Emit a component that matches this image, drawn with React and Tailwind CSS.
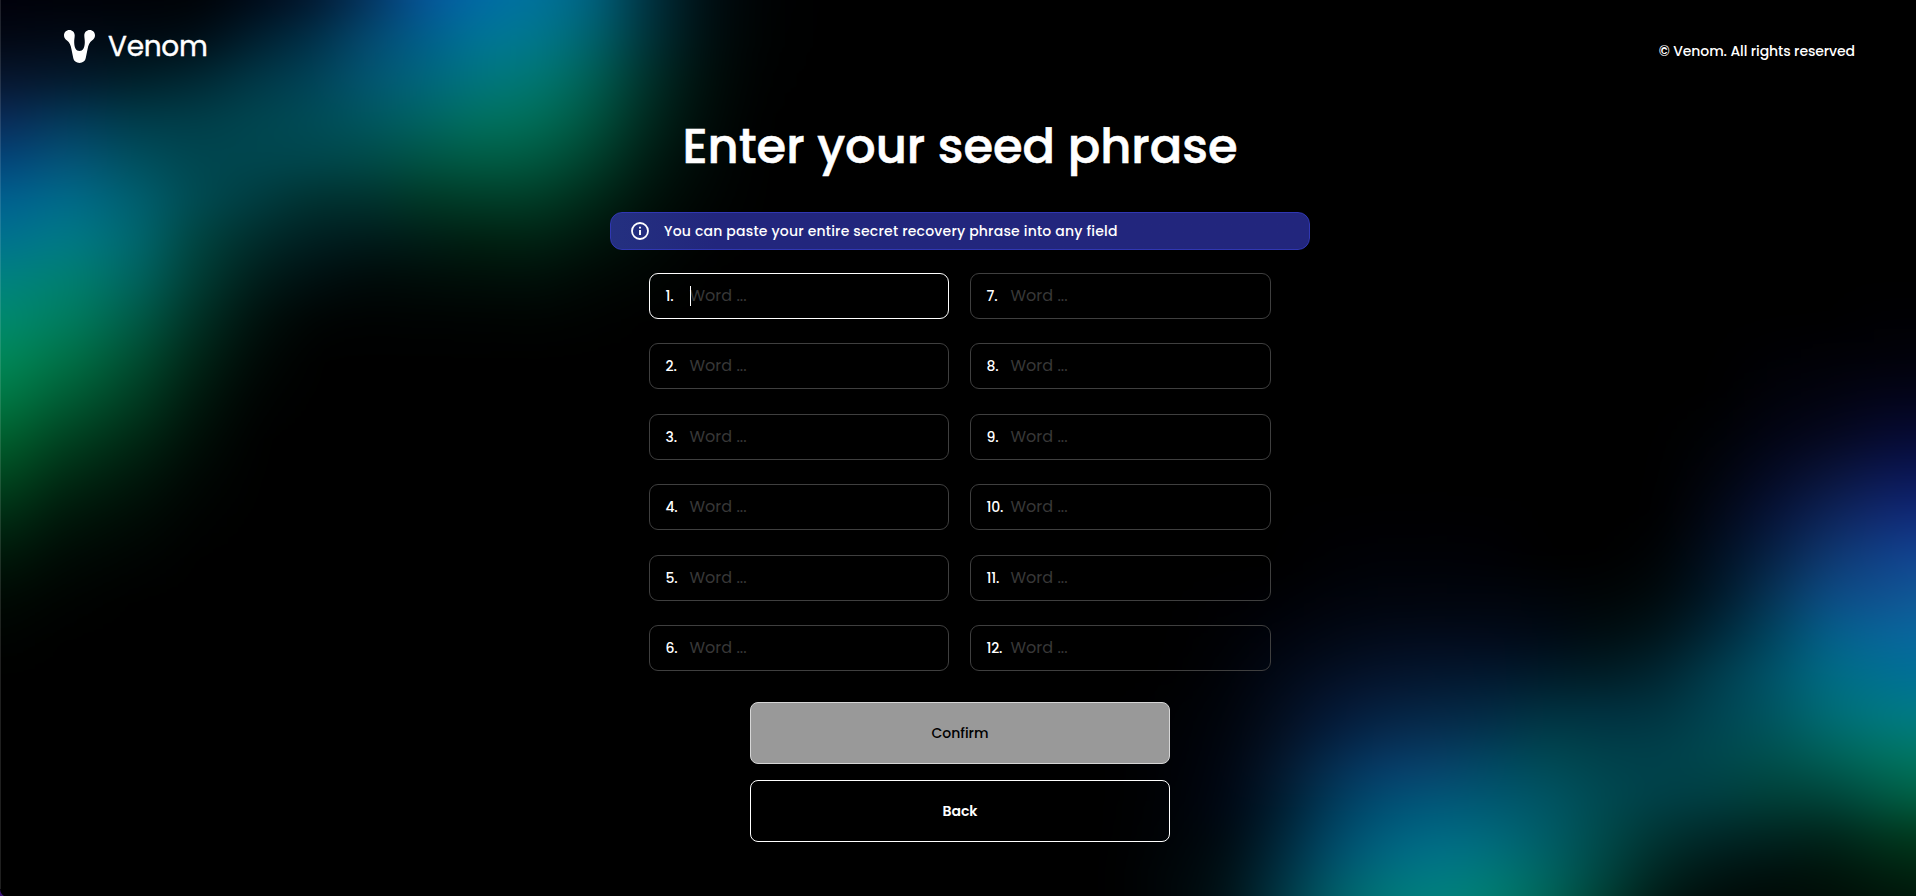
const STEP = 40;

// Vertical colour ramps of the glow; every ramp starts at y0 and takes a stop each STEP pixels.
const RAMPS = [
  { x: 0, y0: 0, c: ['#00000a', '#020814', '#07162f', '#0a2a58', '#03447a', '#006090', '#00728f', '#008280', '#008a6e', '#008858', '#007844', '#00602e', '#00461f', '#002c13', '#001709', '#000903', '#000301', '#000'] },
  { x: 70, y0: 0, c: ['#000208', '#020a16', '#041a2e', '#033a5a', '#045478', '#006b8a', '#007a86', '#008070', '#007c5e', '#007046', '#005a33', '#004020', '#002812', '#001509', '#000904', '#000301', '#000'] },
  { x: 135, y0: 0, c: ['#000207', '#000a12', '#00202a', '#003c4a', '#00505f', '#006070', '#006870', '#006560', '#005c48', '#004e32', '#003c22', '#002814', '#00170b', '#000b05', '#000402', '#000'] },
  { x: 197, y0: 0, c: ['#000306', '#000d16', '#002833', '#003d48', '#00464f', '#004a50', '#00443f', '#003c33', '#003024', '#002416', '#00180d', '#000e07', '#000603', '#000201', '#000'] },
  { x: 255, y0: 0, c: ['#000a18', '#002030', '#003746', '#00454f', '#00464e', '#003c40', '#002c2b', '#001d1a', '#00110d', '#000906', '#000302', '#000'] },
  { x: 312, y0: 0, c: ['#02182f', '#003048', '#004256', '#004b56', '#00464c', '#003130', '#001e20', '#000f10', '#000403', '#000'] },
  { x: 369, y0: 0, c: ['#043560', '#044a70', '#035570', '#00565f', '#004a48', '#00312e', '#001a1a', '#000a09', '#000202', '#000'] },
  { x: 427, y0: 0, c: ['#06559a', '#005f8c', '#00667c', '#006462', '#005444', '#003825', '#001d16', '#000c08', '#000302', '#000'] },
  { x: 482, y0: 0, c: ['#006ca6', '#007696', '#00767e', '#007260', '#005c44', '#003c28', '#002010', '#000e08', '#000302', '#000'] },
  { x: 537, y0: 0, c: ['#00749c', '#00788c', '#007872', '#006e58', '#005840', '#003c26', '#002213', '#000f09', '#000402', '#000'] },
  { x: 592, y0: 0, c: ['#006480', '#00646c', '#006054', '#005440', '#00402c', '#002818', '#00150c', '#000804', '#000201', '#000'] },
  { x: 648, y0: 0, c: ['#003240', '#003238', '#00302a', '#00281e', '#001c13', '#00110a', '#000905', '#000402', '#000'] },
  { x: 702, y0: 0, c: ['#001014', '#001011', '#000f0c', '#000c09', '#000806', '#000503', '#000201', '#000'] },
  { x: 760, y0: 0, c: ['#000203', '#000202', '#000101', '#000'] },
  { x: 830, y0: 0, c: ['#000', '#000'] },
  { x: 1110, y0: 540, c: ['#000', '#000'] },
  { x: 1166, y0: 553, c: ['#000', '#000', '#000', '#000', '#000103', '#000105', '#000205', '#000306', '#000508'] },
  { x: 1223, y0: 565, c: ['#000', '#000002', '#000104', '#000208', '#00040b', '#00050f', '#000612', '#000a10', '#001014'] },
  { x: 1278, y0: 530, c: ['#000', '#000', '#000107', '#010510', '#020a18', '#040f20', '#04162b', '#001c2e', '#002638', '#003040', '#003a40'] },
  { x: 1330, y0: 490, c: ['#000', '#000002', '#000105', '#01040d', '#020a18', '#04122a', '#041c3c', '#042e50', '#003c5c', '#004a68', '#005a68', '#006060'] },
  { x: 1383, y0: 490, c: ['#000', '#000003', '#000208', '#010610', '#030d20', '#051834', '#06294c', '#063d6a', '#005276', '#006480', '#00757a', '#007a70'] },
  { x: 1438, y0: 490, c: ['#000', '#000003', '#000208', '#010610', '#030e22', '#041c36', '#062e50', '#08446c', '#005c7c', '#007088', '#008082', '#008472'] },
  { x: 1492, y0: 485, c: ['#000', '#000002', '#000106', '#01060f', '#020c1e', '#021c34', '#03304a', '#004862', '#005a72', '#006c7c', '#007c74', '#007f6a'] },
  { x: 1549, y0: 557, c: ['#000', '#00040a', '#000a16', '#001c2a', '#003442', '#004852', '#005462', '#005c66', '#006460', '#006450'] },
  { x: 1604, y0: 553, c: ['#000', '#000405', '#000d10', '#001c24', '#003040', '#00404a', '#004850', '#00494a', '#004440', '#003c2c'] },
  { x: 1660, y0: 513, c: ['#000', '#000305', '#00090c', '#00141a', '#002430', '#003440', '#003f4a', '#004048', '#003434', '#002420', '#00140f'] },
  { x: 1717, y0: 395, c: ['#000', '#000205', '#01040c', '#020816', '#010f20', '#001828', '#00283a', '#003c4c', '#004452', '#00484e', '#003f42', '#002828', '#001412', '#000805'] },
  { x: 1773, y0: 316, c: ['#000', '#000004', '#01020a', '#020414', '#040a24', '#061338', '#062246', '#063456', '#004560', '#005268', '#005560', '#00504e', '#004038', '#002420', '#000f0c', '#000805'] },
  { x: 1829, y0: 316, c: ['#000', '#010106', '#02030f', '#05081e', '#0a143a', '#0d2458', '#0f3870', '#0c4c84', '#04608a', '#006c84', '#006c74', '#006058', '#00443a', '#00241a', '#00120a', '#000c06'] },
  { x: 1882, y0: 276, c: ['#000', '#000003', '#010108', '#030418', '#060a2e', '#0b1850', '#112a70', '#104086', '#10508f', '#086498', '#007090', '#007880', '#007060', '#005644', '#003420', '#001c0e', '#001008'] },
  { x: 1925, y0: 276, c: ['#000', '#000003', '#01010a', '#03041a', '#060a36', '#0a1658', '#102a7c', '#124494', '#105a98', '#0868a0', '#007098', '#007c84', '#007864', '#006444', '#003c1c', '#00240f', '#001408'] },
];

function Glow() {
  return (
    <svg className="pointer-events-none absolute inset-0" width="1916" height="896" viewBox="0 0 1916 896" aria-hidden="true">
      <defs>
        <filter id="soft" filterUnits="userSpaceOnUse" x="-120" y="-120" width="2160" height="1140" colorInterpolationFilters="sRGB">
          <feGaussianBlur stdDeviation="27 12" />
        </filter>
        {RAMPS.map((r) => (
          <linearGradient key={r.x} id={`ramp${r.x}`} gradientUnits="userSpaceOnUse" x1="0" x2="0" y1={r.y0} y2={r.y0 + STEP * (r.c.length - 1)}>
            {r.c.map((color, i) => (
              <stop key={i} offset={i / (r.c.length - 1)} stopColor={color} />
            ))}
          </linearGradient>
        ))}
      </defs>
      <g filter="url(#soft)">
        <rect x="-120" y="-120" width="2160" height="1140" fill="#000" />
        {RAMPS.map((r, i) => {
          const left = i === 0 ? -120 : (RAMPS[i - 1].x + r.x) / 2;
          const right = i === RAMPS.length - 1 ? 2040 : (r.x + RAMPS[i + 1].x) / 2;
          return <rect key={r.x} x={left} y="-120" width={right - left + 0.5} height="1140" fill={`url(#ramp${r.x})`} />;
        })}
      </g>
      <rect width="1" height="889" fill="#fff" opacity=".12" />
      <path d="M0 889c.4 3.600 1.600 5.600 4 7H0Z" fill="#3b1578" />
    </svg>
  );
}

function Logo() {
  return (
    <div className="flex items-center gap-[13px]">
      <svg width="31" height="33" viewBox="0 0 31 33" fill="#fff" aria-hidden="true">
        <path d="M5.300 0C8.400 0 10.700 2.300 10.700 5.300c0 2.600-.6 4.300-.5 7.300.1 5 1.900 8.500 5.300 8.500s5.200-3.500 5.300-8.500c.1-3-.5-4.700-.5-7.300C20.300 2.300 22.600 0 25.700 0 28.700 0 31 2.400 31 5.300c0 2.400-1.200 4-3 5.300-2.500 1.900-3.700 4.500-4.400 8.400l-1.900 9.300c-.5 2.700-2.900 4.700-6.200 4.700s-5.700-2-6.200-4.700L7.400 19C6.700 15.100 5.500 12.500 3 10.600 1.200 9.300 0 7.700 0 5.300 0 2.400 2.300 0 5.300 0Z" />
      </svg>
      <span className="mt-[2px] text-[28px] leading-8 tracking-[-0.3px] [-webkit-text-stroke:0.4px_#fff]">Venom</span>
    </div>
  );
}

function WordField({ n, active }) {
  return (
    <label className={`flex h-[46px] items-center rounded-[9px] border pl-[15.500px] ${active ? 'border-white' : 'border-[#3f3f3f]'}`}>
      <span className="w-6 text-sm leading-5 font-medium tracking-[-0.2px] whitespace-nowrap">{n}.</span>
      <span className={`-ml-px h-5 w-px ${active ? 'translate-x-px bg-white' : ''}`} />
      <span className="text-base leading-6 text-[#383838]">Word ...</span>
    </label>
  );
}

export default function App() {
  return (
    <div className="relative h-[896px] w-[1916px] overflow-hidden bg-black font-['Poppins','Inter',sans-serif] text-white">
      <Glow />
      <div className="relative flex h-full flex-col">
        <header className="flex h-[92px] items-center justify-between pr-[61px] pl-16">
          <Logo />
          <p className="mt-[9px] text-sm leading-5 font-medium tracking-[-0.1px]">© Venom. All rights reserved</p>
        </header>
        <main className="ml-[610px] flex w-[700px] flex-col items-center">
          <h1 className="mt-[21px] h-[67px] text-5xl leading-[68px] font-medium whitespace-nowrap [-webkit-text-stroke:0.6px_#fff]">Enter your seed phrase</h1>
          <div className="mt-8 flex h-[38px] w-full items-center gap-[15px] rounded-xl border border-[#3037b3] bg-linear-to-r from-[#243080] to-[#22267d] to-15% pl-5">
            <svg width="18" height="18" viewBox="0 0 18 18" fill="none" aria-hidden="true">
              <circle cx="9" cy="9" r="8" stroke="#fff" strokeWidth="1.800" />
              <path d="M9 8v5M9 4.700v1.900" stroke="#fff" strokeWidth="1.900" />
            </svg>
            <p className="text-sm font-medium tracking-[0.2px]">You can paste your entire secret recovery phrase into any field</p>
          </div>
          <div className="mt-[23px] grid w-[622px] grid-flow-col grid-cols-[300px_301px] grid-rows-6 gap-x-[21px] gap-y-[24.400px]">
            {Array.from({ length: 12 }, (_, i) => (
              <WordField key={i} n={i + 1} active={i === 0} />
            ))}
          </div>
          <button className="mt-[31px] h-[62px] w-[420px] rounded-lg border border-[#d6d6d6] bg-[#999] text-sm font-medium text-black">Confirm</button>
          <button className="mt-4 h-[62px] w-[420px] rounded-lg border border-white text-sm font-semibold">Back</button>
        </main>
      </div>
    </div>
  );
}
